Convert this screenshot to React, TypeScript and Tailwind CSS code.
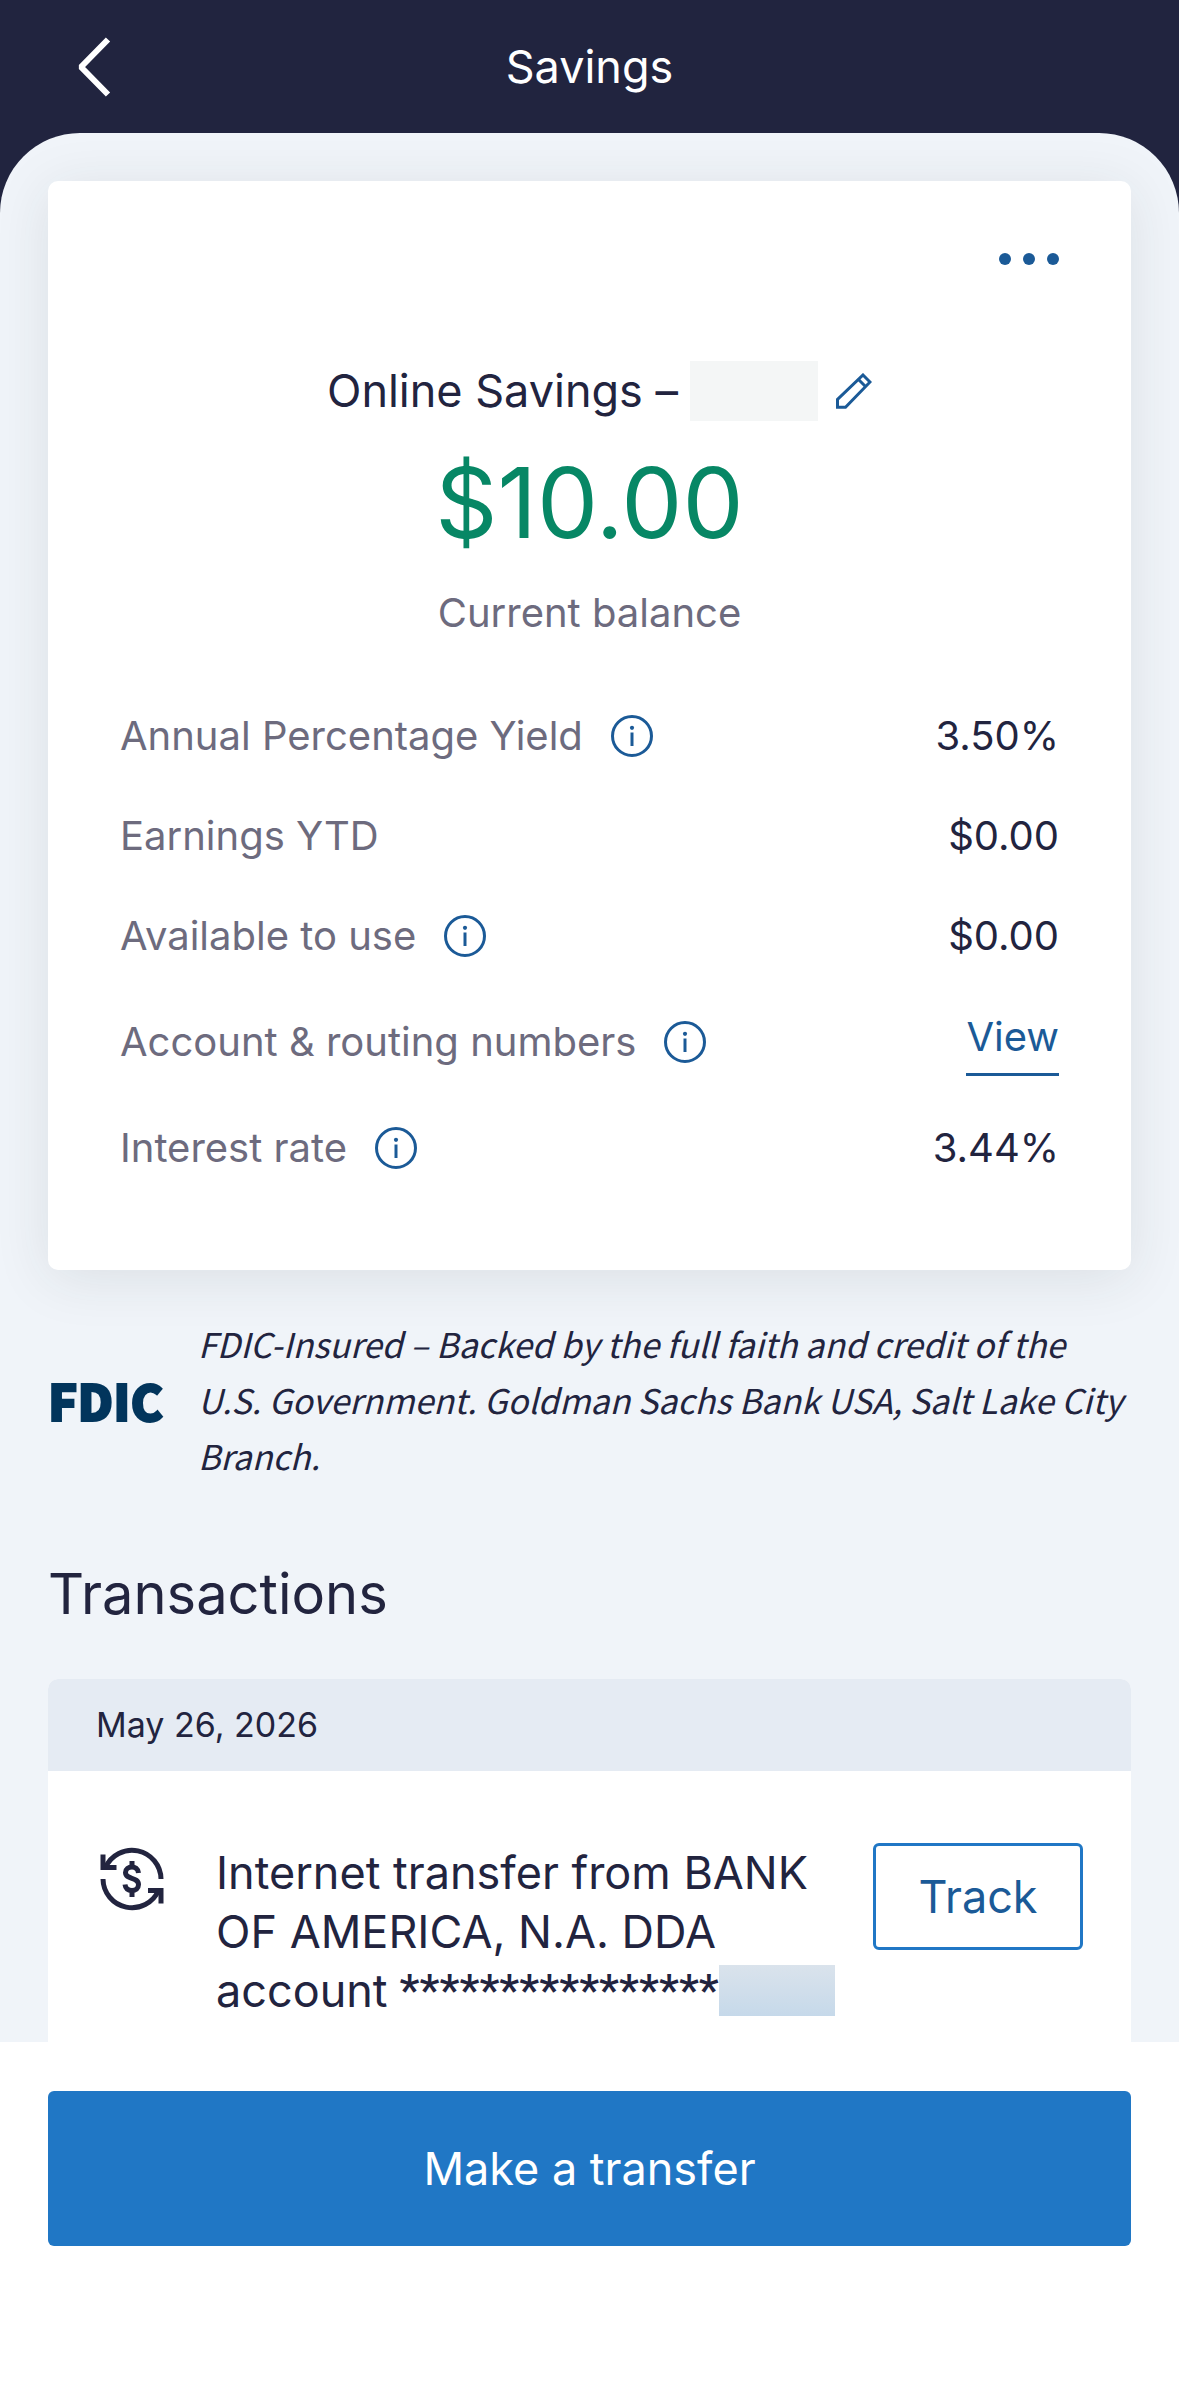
import type { ReactNode } from "react";

function InfoIcon() {
  return (
    <svg viewBox="0 0 42 42" className="size-[42px]" fill="none" aria-hidden="true">
      <circle cx="21" cy="21" r="19.5" stroke="#1b5a97" strokeWidth="3" />
      <circle cx="21" cy="12.8" r="2.1" fill="#1b5a97" />
      <path d="M21 17.5V31" stroke="#1b5a97" strokeWidth="3" />
    </svg>
  );
}

function PencilIcon() {
  return (
    <svg viewBox="0 0 36 36" className="size-9" fill="none" stroke="#1b5a97" strokeWidth="3" aria-hidden="true">
      <path d="M27 2L34 9L9.5 34.3H1.5V26.5Z" />
      <path d="M22.5 6.5L29.5 13.5" />
    </svg>
  );
}

function TransferIcon() {
  return (
    <svg viewBox="0 0 64 64" className="size-16" fill="none" stroke="#22243f" strokeWidth="5" aria-hidden="true">
      <path d="M61 32A29 29 0 0 0 5.5 20.5" />
      <path d="M3 7.5V20.5H16.5" />
      <path d="M3 32A29 29 0 0 0 58.5 43.5" />
      <path d="M61 56.5V43.5H48" />
      <path d="M38.5 26C38 21.5 34.8 20 32 20C28.5 20 25.5 22 25.5 25.5C25.5 33 38.5 29.5 38.5 37.5C38.5 41.5 35.5 43.5 32 43.5C28 43.5 25.5 41.5 25 37.5" />
      <path d="M32 14V20M32 43V50" />
    </svg>
  );
}

function Row({ label, info, tall, children }: { label: string; info?: boolean; tall?: boolean; children: ReactNode }) {
  return (
    <div className={`flex items-center justify-between ${tall ? "h-28" : "h-[100px]"}`}>
      <dt className="flex items-center gap-7 text-[#6d6b7e]">
        {label}
        {info && (
          <button type="button" aria-label={`About ${label}`}>
            <InfoIcon />
          </button>
        )}
      </dt>
      <dd>{children}</dd>
    </div>
  );
}

export default function App() {
  return (
    <div className="flex min-h-screen flex-col bg-[#21243f] font-['Inter',sans-serif] text-[40px] leading-[56px] text-[#22243f]">
      <header className="grid h-[133px] shrink-0 grid-cols-[1fr_auto_1fr] items-center px-[76px] text-white">
        <button type="button" aria-label="Back" className="justify-self-start">
          <svg viewBox="0 0 36 60" className="h-[60px] w-9" fill="none" stroke="currentColor" strokeWidth="6" strokeLinejoin="bevel" aria-hidden="true">
            <path d="M32 2.5L5 30L32 57.5" />
          </svg>
        </button>
        <h1 className="text-[45px]">Savings</h1>
      </header>

      <main className="grow rounded-t-[80px] bg-[#f0f4f9] px-12 pt-12">
        <section className="rounded-[10px] bg-white px-[72px] pb-[72px] shadow-[0_8px_56px_rgba(40,50,50,0.10)]">
          <div className="flex justify-end pt-[72px]">
            <button type="button" aria-label="More options" className="flex gap-3">
              <span className="size-3 rounded-full bg-[#1b5a97]" />
              <span className="size-3 rounded-full bg-[#1b5a97]" />
              <span className="size-3 rounded-full bg-[#1b5a97]" />
            </button>
          </div>
          <div className="mt-24 flex h-[60px] items-center justify-center pl-5 text-[45px]">
            <h2>Online Savings –</h2>
            <span className="ml-3 h-[60px] w-32 bg-[#f4f6f6]" />
            <button type="button" aria-label="Rename account" className="ml-[18px]">
              <PencilIcon />
            </button>
          </div>
          <p className="mt-[22px] text-center text-[97px] leading-[120px] text-[#078765]">$10.00</p>
          <p className="mt-[22px] text-center text-[#6d6b7e]">Current balance</p>
          <dl className="mt-[45px]">
            <Row label="Annual Percentage Yield" info>3.50%</Row>
            <Row label="Earnings YTD">$0.00</Row>
            <Row label="Available to use" info>$0.00</Row>
            <Row label="Account & routing numbers" info tall>
              <a href="#numbers" className="block border-b-3 border-[#1b5a97] pb-2 text-[#1b5a97]">View</a>
            </Row>
            <Row label="Interest rate" info>3.44%</Row>
          </dl>
        </section>

        <section className="mt-[46px] flex items-center gap-9 font-['Noto_Sans_CJK_SC',sans-serif]">
          <span className="w-[114px] shrink-0 text-[49px] font-black text-[#02355c] [-webkit-text-stroke:2px_#02355c]">FDIC</span>
          <p className="text-[34px] italic">
            FDIC-Insured – Backed by the full faith and credit of the U.S. Government. Goldman Sachs Bank USA, Salt Lake City Branch.
          </p>
        </section>

        <h2 className="mt-[74px] text-[56px] leading-[72px]">Transactions</h2>

        <section className="mt-[49px] overflow-hidden rounded-t-[10px] bg-white">
          <h3 className="flex h-[92px] items-center bg-[#e5ebf3] px-12 text-[34px]">May 26, 2026</h3>
          <div className="flex items-start px-12 pt-[72px] pb-[22px] text-[45px] leading-[59px]">
            <div className="mt-1 ml-1 shrink-0">
              <TransferIcon />
            </div>
            <div className="ml-[52px] grow">
              <p>Internet transfer from BANK OF AMERICA, N.A. DDA</p>
              <p className="flex items-center">
                <span>account</span>
                <span className="ml-3 font-['Roboto',sans-serif] font-medium">****************</span>
                <span className="h-[51px] w-[116px] bg-linear-to-b from-[#dae3ec] to-[#c6d9ea]" />
              </p>
            </div>
            <button type="button" className="h-[107px] w-[210px] shrink-0 rounded-md border-3 border-[#2077c5] text-[#1b5a97]">
              Track
            </button>
          </div>
        </section>
      </main>

      <footer className="shrink-0 bg-white px-12 pt-[49px] pb-[150px]">
        <button type="button" className="h-[155px] w-full rounded-md bg-[#2077c5] text-[45px] text-white">
          Make a transfer
        </button>
      </footer>
    </div>
  );
}
